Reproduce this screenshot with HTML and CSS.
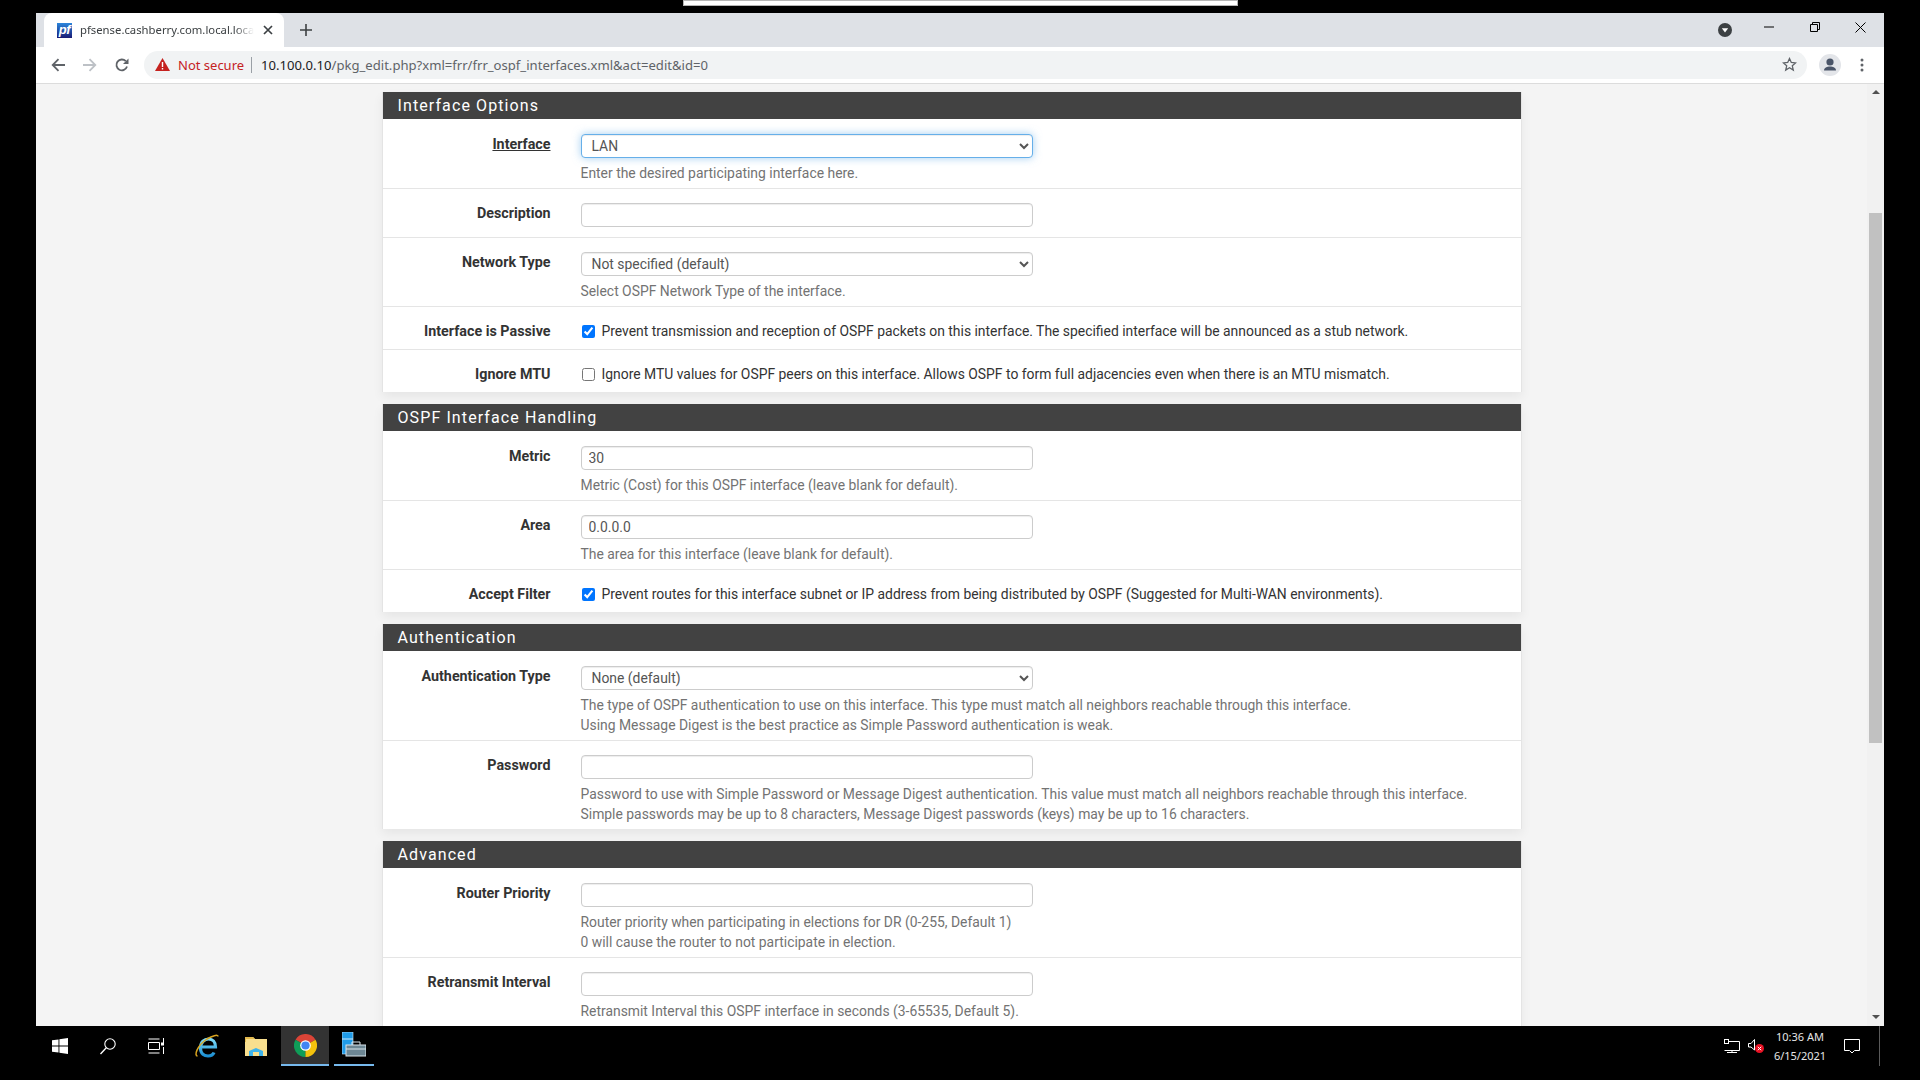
FILE: index.html
```html
<!DOCTYPE html>
<html lang="en">
<head>
<meta charset="utf-8">
<title>pfSense</title>
<link rel="stylesheet" href="styles.css">
</head>
<body>
<div class="topstrip"><div class="remote-bar"></div></div>
<div class="window">
  <div class="tabstrip">
    <div class="tab">
      <span class="favicon">pf</span>
      <span class="tab-title">pfsense.cashberry.com.local.loca</span>
      <svg class="tab-close" width="10" height="10" viewBox="0 0 10 10"><path d="M1 1l8 8M9 1l-8 8" stroke="#3c4043" stroke-width="1.7" fill="none"/></svg>
    </div>
    <svg class="newtab" width="12" height="12" viewBox="0 0 12 12"><path d="M6 0v12M0 6h12" stroke="#3c4043" stroke-width="1.6" fill="none"/></svg>
    <div class="win-controls">
      <svg class="media" width="14" height="14" viewBox="0 0 14 14"><circle cx="7" cy="7" r="7" fill="#3c4043"/><path d="M3.8 5.3h6.4L7 9.6z" fill="#fff"/></svg>
      <svg class="wc wc-min" width="10" height="10" viewBox="0 0 10 10"><path d="M0 5h10" stroke="#000" stroke-width="1" fill="none"/></svg>
      <svg class="wc wc-max" width="10" height="10" viewBox="0 0 10 10"><path d="M.5 2.5h7v7h-7zM2.5 2.5V.5h7v7h-2" stroke="#000" stroke-width="1" fill="none"/></svg>
      <svg class="wc wc-close" width="11" height="11" viewBox="0 0 11 11"><path d="M.5.5l10 10M10.5.5l-10 10" stroke="#000" stroke-width="1" fill="none"/></svg>
    </div>
  </div>
  <div class="toolbar">
    <svg class="nav nav-back" width="14" height="14" viewBox="0 0 14 14"><path d="M14 7H2M7.5 1.2L1.7 7l5.8 5.8" stroke="#5f6368" stroke-width="1.8" fill="none"/></svg>
    <svg class="nav nav-fwd" width="14" height="14" viewBox="0 0 14 14"><path d="M0 7h12M6.5 1.2L12.3 7l-5.800 5.800" stroke="#bdc1c6" stroke-width="1.8" fill="none"/></svg>
    <svg class="nav nav-reload" width="14" height="14" viewBox="0 0 14 14"><path d="M12 8.500A5.400 5.400 0 1 1 10.800 3.200" stroke="#5f6368" stroke-width="1.800" fill="none"/><path d="M13.500 .5v5.500H8z" fill="#5f6368"/></svg>
    <div class="omnibox">
      <svg class="warn" width="15" height="13" viewBox="0 0 15 13"><path d="M7.500 0L15 13H0z" fill="#c5221f"/><path d="M6.800 4h1.400v5H6.800zM6.800 10h1.400v1.500H6.800z" fill="#fff"/></svg>
      <span class="not-secure">Not secure</span>
      <span class="omni-sep"></span>
      <span class="url"><span class="url-host">10.100.0.10</span>/pkg_edit.php?xml=frr/frr_ospf_interfaces.xml&amp;act=edit&amp;id=0</span>
      <svg class="star" width="15" height="15" viewBox="0 0 15 15"><path d="M7.500 1.500l1.800 4 4.300.4-3.300 2.900 1 4.300-3.800-2.300-3.800 2.300 1-4.300L1.400 5.900l4.300-.4z" stroke="#5f6368" stroke-width="1.300" fill="none"/></svg>
    </div>
    <svg class="profile" width="22" height="22" viewBox="0 0 22 22"><circle cx="11" cy="11" r="11" fill="#e3e5e9"/><circle cx="11" cy="8" r="3.600" fill="#4a5568"/><path d="M5 16.500c0-2.800 3-4 6-4s6 1.200 6 4z" fill="#4a5568"/></svg>
    <svg class="kebab" width="4" height="14" viewBox="0 0 4 14"><circle cx="2" cy="2" r="1.500" fill="#5f6368"/><circle cx="2" cy="7" r="1.500" fill="#5f6368"/><circle cx="2" cy="12" r="1.500" fill="#5f6368"/></svg>
  </div>
  <div class="viewport">
    <main class="page">
      <section class="panel">
        <h2 class="panel-title">Interface Options</h2>
        <div class="panel-body">
          <div class="row"><label class="lbl"><span class="lbl-u">Interface</span></label>
            <div class="field"><select class="ctl ctl-focus"><option>LAN</option></select><p class="help">Enter the desired participating interface here.</p></div></div>
          <div class="row"><label class="lbl">Description</label>
            <div class="field"><input class="ctl" type="text"></div></div>
          <div class="row"><label class="lbl">Network Type</label>
            <div class="field"><select class="ctl"><option>Not specified (default)</option></select><p class="help">Select OSPF Network Type of the interface.</p></div></div>
          <div class="row row-check"><label class="lbl">Interface is Passive</label>
            <div class="check"><input type="checkbox" checked><span>Prevent transmission and reception of OSPF packets on this interface. The specified interface will be announced as a stub network.</span></div></div>
          <div class="row row-check"><label class="lbl">Ignore MTU</label>
            <div class="check"><input type="checkbox"><span>Ignore MTU values for OSPF peers on this interface. Allows OSPF to form full adjacencies even when there is an MTU mismatch.</span></div></div>
        </div>
      </section>
      <section class="panel">
        <h2 class="panel-title">OSPF Interface Handling</h2>
        <div class="panel-body">
          <div class="row"><label class="lbl">Metric</label>
            <div class="field"><input class="ctl" type="text" value="30"><p class="help">Metric (Cost) for this OSPF interface (leave blank for default).</p></div></div>
          <div class="row"><label class="lbl">Area</label>
            <div class="field"><input class="ctl" type="text" value="0.0.0.0"><p class="help">The area for this interface (leave blank for default).</p></div></div>
          <div class="row row-check"><label class="lbl">Accept Filter</label>
            <div class="check"><input type="checkbox" checked><span>Prevent routes for this interface subnet or IP address from being distributed by OSPF (Suggested for Multi-WAN environments).</span></div></div>
        </div>
      </section>
      <section class="panel">
        <h2 class="panel-title">Authentication</h2>
        <div class="panel-body">
          <div class="row"><label class="lbl">Authentication Type</label>
            <div class="field"><select class="ctl"><option>None (default)</option></select><p class="help">The type of OSPF authentication to use on this interface. This type must match all neighbors reachable through this interface.<br>Using Message Digest is the best practice as Simple Password authentication is weak.</p></div></div>
          <div class="row"><label class="lbl">Password</label>
            <div class="field"><input class="ctl" type="text"><p class="help">Password to use with Simple Password or Message Digest authentication. This value must match all neighbors reachable through this interface.<br>Simple passwords may be up to 8 characters, Message Digest passwords (keys) may be up to 16 characters.</p></div></div>
        </div>
      </section>
      <section class="panel">
        <h2 class="panel-title">Advanced</h2>
        <div class="panel-body">
          <div class="row"><label class="lbl">Router Priority</label>
            <div class="field"><input class="ctl" type="text"><p class="help">Router priority when participating in elections for DR (0-255, Default 1)<br>0 will cause the router to not participate in election.</p></div></div>
          <div class="row"><label class="lbl">Retransmit Interval</label>
            <div class="field"><input class="ctl" type="text"><p class="help">Retransmit Interval this OSPF interface in seconds (3-65535, Default 5).</p></div></div>
        </div>
      </section>
    </main>
    <div class="scrollbar">
      <span class="arrow-up"></span>
      <div class="thumb"></div>
      <span class="arrow-down"></span>
    </div>
  </div>
</div>
<footer class="taskbar">
  <div class="tb-item tb-start"><svg width="16" height="16" viewBox="0 0 16 16"><path d="M0 2.300L6.500 1.400V7.500H0zM7.400 1.300L16 0V7.500H7.400zM0 8.500H6.500V14.600L0 13.700zM7.400 8.500H16V16L7.400 14.700z" fill="#fff"/></svg></div>
  <div class="tb-item"><svg width="16" height="17" viewBox="0 0 16 17"><circle cx="10" cy="6" r="5.200" stroke="#fff" stroke-width="1.100" fill="none"/><path d="M6.300 9.700L.5 16" stroke="#fff" stroke-width="1.300" fill="none"/></svg></div>
  <div class="tb-item"><svg width="16" height="16" viewBox="0 0 16 16"><path d="M.5 1h11M.5 15h11M.5 4.500h11v7H.5zM15.500 0v5M15.500 9v7" stroke="#fff" stroke-width="1" fill="none"/><rect x="13" y="4.500" width="3" height="3" fill="#fff"/></svg></div>
  <div class="tb-item tb-ie"><svg width="24" height="24" viewBox="0 0 24 24"><defs><linearGradient id="ieg" x1="0" y1="0" x2="0" y2="1"><stop offset="0" stop-color="#7fdcf8"/><stop offset="1" stop-color="#1c8fd2"/></linearGradient></defs><path d="M6.500 13h14c0-5-3-8-7-8s-8 3-8 9 4 8 7.500 8 5-1 6-3.500" stroke="url(#ieg)" stroke-width="3.200" fill="none"/><path d="M2.500 22C-1 22 1.500 12 12 5c5-3 11-5 11-2.500" stroke="#d9a520" stroke-width="1.500" fill="none"/></svg></div>
  <div class="tb-item tb-folder"><svg width="22" height="20" viewBox="0 0 22 20"><path d="M0 1h8l2 2h12v17H0z" fill="#f9df8e"/><path d="M0 1h8l2 2H1v3H0z" fill="#e3b94d"/><path d="M4 20v-5l7-3 7 3v5h-4v-4h-6v4z" fill="#3fb4ec"/></svg></div>
  <div class="tb-item tb-chrome"><svg width="23" height="23" viewBox="0 0 24 24"><path d="M12 12L1.600 6A12 12 0 0 1 22.400 6z" fill="#db4437"/><path d="M12 12L1.600 6A12 12 0 0 0 12 24z" fill="#0f9d58"/><path d="M12 12L22.400 6A12 12 0 0 1 12 24z" fill="#f4c20d"/><circle cx="12" cy="12" r="5.600" fill="#fff"/><circle cx="12" cy="12" r="4.300" fill="#4285f4"/></svg></div>
  <div class="tb-item tb-server"><svg width="24" height="26" viewBox="0 0 24 26"><rect x="0" y="0" width="11" height="22" fill="#1f9be8" stroke="#cfeafc" stroke-width=".6"/><path d="M0 7h11" stroke="#cfeafc" stroke-width="1"/><rect x="4" y="13" width="20" height="11" fill="#6d8794" stroke="#d9e4ea" stroke-width="1"/><path d="M10 13v-3h8v3M4 17h20" stroke="#d9e4ea" stroke-width="1" fill="none"/></svg></div>
  <div class="tray">
    <svg class="tray-net" width="16" height="14" viewBox="0 0 16 14"><path d="M3 2.500h12.500v9H.5M8 11.500V13.500M3 13.500h10" stroke="#fff" stroke-width="1" fill="none"/><rect x=".5" y=".5" width="4" height="4" fill="#000" stroke="#fff"/></svg>
    <svg class="tray-vol" width="16" height="14" viewBox="0 0 16 14"><path d="M.5 4.500h2.500L6.500.5v10.500L3 8H.5z" stroke="#fff" stroke-width="1" fill="none"/><circle cx="11.500" cy="9.500" r="4.500" fill="#e81123"/><path d="M9.800 7.800l3.400 3.400M13.200 7.800l-3.400 3.400" stroke="#fff" stroke-width="1"/></svg>
    <div class="clock"><span>10:36 AM</span><span>6/15/2021</span></div>
    <svg class="tray-note" width="16" height="15" viewBox="0 0 16 15"><path d="M.5.500h15v11h-5l-2.500 2.500-2.500-2.500h-5z" stroke="#fff" stroke-width="1" fill="none"/></svg>
    <span class="show-desktop"></span>
  </div>
</footer>
</body>
</html>
```
FILE: styles.css
```css
* { box-sizing: border-box; }
html, body { margin: 0; padding: 0; }
body { width: 1920px; height: 1080px; background: #000; overflow: hidden; display: flex; flex-direction: column; font-family: Roboto, sans-serif; }

.topstrip { height: 13px; flex: none; padding-left: 683px; }
.remote-bar { width: 555px; height: 6px; background: #fff; border: 1px solid #b5b5b5; }

.window { flex: 1; min-height: 0; margin: 0 36px; display: flex; flex-direction: column; background: #f4f4f4; }

.tabstrip { height: 34px; flex: none; background: #dee1e6; display: flex; align-items: center; padding-left: 8px; }
.tab { width: 240px; height: 34px; background: #fff; border-radius: 8px 8px 0 0; display: flex; align-items: center; padding-left: 13px; }
.favicon { width: 15px; height: 15px; flex: none; background: linear-gradient(#2b86dc, #191a74); color: #fff; font: italic 700 13px/13px "Liberation Sans", sans-serif; letter-spacing: -.5px; text-align: center; overflow: hidden; }
.tab-title { width: 174px; margin-left: 8px; flex: none; font: 11.300px/16px "Noto Sans", sans-serif; color: #3c4043; white-space: nowrap; -webkit-mask-image: linear-gradient(to right, #000 155px, transparent 174px); mask-image: linear-gradient(to right, #000 155px, transparent 174px); }
.tab-close { margin-left: 9px; flex: none; }
.newtab { margin-left: 16px; flex: none; }
.win-controls { margin-left: auto; display: flex; align-items: center; height: 100%; }
.media { margin-right: 32px; }
.wc { margin-bottom: 6px; }
.wc-min { margin-right: 36px; }
.wc-max { margin-right: 35px; }
.wc-close { margin-right: 18px; }

.toolbar { height: 37px; flex: none; background: #fff; border-bottom: 1px solid #dcdcdc; display: flex; align-items: center; padding: 0 0 1px 15px; }
.nav { flex: none; }
.nav-fwd { margin-left: 18px; }
.nav-reload { margin-left: 18px; }
.omnibox { width: 1663px; height: 28px; margin-left: 15px; border-radius: 14px; background: #f1f3f4; display: flex; align-items: center; padding-left: 11px; flex: none; }
.warn { flex: none; }
.not-secure { margin-left: 8px; font: 13px/16px "Noto Sans", sans-serif; color: #c5221f; white-space: nowrap; }
.omni-sep { width: 1px; height: 16px; background: #9aa0a6; margin-left: 7px; flex: none; }
.url { margin-left: 9px; font: 13.100px/16px "Noto Sans", sans-serif; color: #5f6368; white-space: nowrap; }
.url-host { color: #202124; }
.star { margin-left: auto; margin-right: 10px; flex: none; }
.profile { margin-left: 12px; flex: none; }
.kebab { margin-left: 19px; flex: none; }

.viewport { flex: 1; min-height: 0; display: flex; overflow: hidden; background: #f4f4f4; }
.page { flex: 1; min-width: 0; padding-top: 8px; display: flex; flex-direction: column; align-items: center; gap: 12px; overflow: hidden; }
.panel { width: 1140px; flex: none; background: #fff; box-shadow: 0 5px 10px rgba(0,0,0,.06); border-left: 1px solid #e4e4e4; border-right: 1px solid #e4e4e4; }
.panel-title { margin: 0; height: 27px; background: #424242; color: #fff; font: 400 16px/28px Roboto, sans-serif; letter-spacing: 1.100px; padding-left: 15px; }
.panel-body { padding-top: 1px; }
.row { display: grid; grid-template-columns: 168px 452px; column-gap: 30px; padding: 14px 0 5px; border-bottom: 1px solid #e5e5e5; }
.row:last-child { border-bottom: 0; }
.row-check { padding-bottom: 8px; grid-template-columns: 168px 1fr; }
.lbl { font: 700 14.300px/20px Roboto, sans-serif; color: #333; text-align: right; }
.lbl-u { text-decoration: underline; }
.field { min-width: 0; }
.ctl { display: block; width: 452px; height: 24px; margin: 0; background: #fff; border: 1px solid #ccc; border-radius: 4px; font: 13.900px/20px Roboto, sans-serif; color: #555; padding: 0 8px 0 7px; box-shadow: inset 0 1px 1px rgba(0,0,0,.075); }
select.ctl { padding: 0 6px; }
.ctl-focus { border-color: #66afe9; box-shadow: inset 0 1px 1px rgba(0,0,0,.075), 0 0 8px rgba(102,175,233,.6); }
.help { margin: 5px 0 0; font: 13.900px/20px Roboto, sans-serif; color: #737373; white-space: nowrap; }
.field:not(:has(.help)) { padding-bottom: 5px; }
.check { display: flex; align-items: center; height: 20px; font: 13.900px/20px Roboto, sans-serif; color: #333; white-space: nowrap; }
.check input { width: 13px; height: 13px; margin: 0 7px 0 1px; flex: none; }

.scrollbar { width: 17px; flex: none; background: #f1f1f1; display: flex; flex-direction: column; align-items: center; }
.arrow-up { margin-top: 6px; width: 0; height: 0; border: 4px solid transparent; border-top: 0; border-bottom: 4px solid #505050; flex: none; }
.thumb { width: 13px; height: 530px; margin-top: 119px; background: #c1c1c1; flex: none; }
.arrow-down { margin-top: auto; margin-bottom: 7px; width: 0; height: 0; border: 4px solid transparent; border-bottom: 0; border-top: 4px solid #505050; flex: none; }

.taskbar { height: 54px; flex: none; background: #000; display: flex; align-items: flex-start; padding-left: 36px; }
.tb-item { width: 48px; height: 40px; display: flex; align-items: center; justify-content: center; flex: none; }
.tb-ie { margin-left: 3px; }
.tb-folder { margin-left: 1px; }
.tb-chrome { margin-left: 1px; background: #333; border-bottom: 2px solid #76b9ed; }
.tb-server { margin-left: 5px; width: 40px; border-bottom: 2px solid #76b9ed; }
.tray { margin-left: auto; height: 40px; display: flex; align-items: center; }
.tray-net { margin-right: 8px; }
.clock { width: 72px; display: flex; flex-direction: column; align-items: center; font: 11px/19px "Noto Sans", sans-serif; color: #e6e6e6; }
.tray-note { margin-left: 8px; margin-right: 19px; }
.show-desktop { width: 1px; height: 40px; background: #5a5a5a; margin-right: 40px; }
```
